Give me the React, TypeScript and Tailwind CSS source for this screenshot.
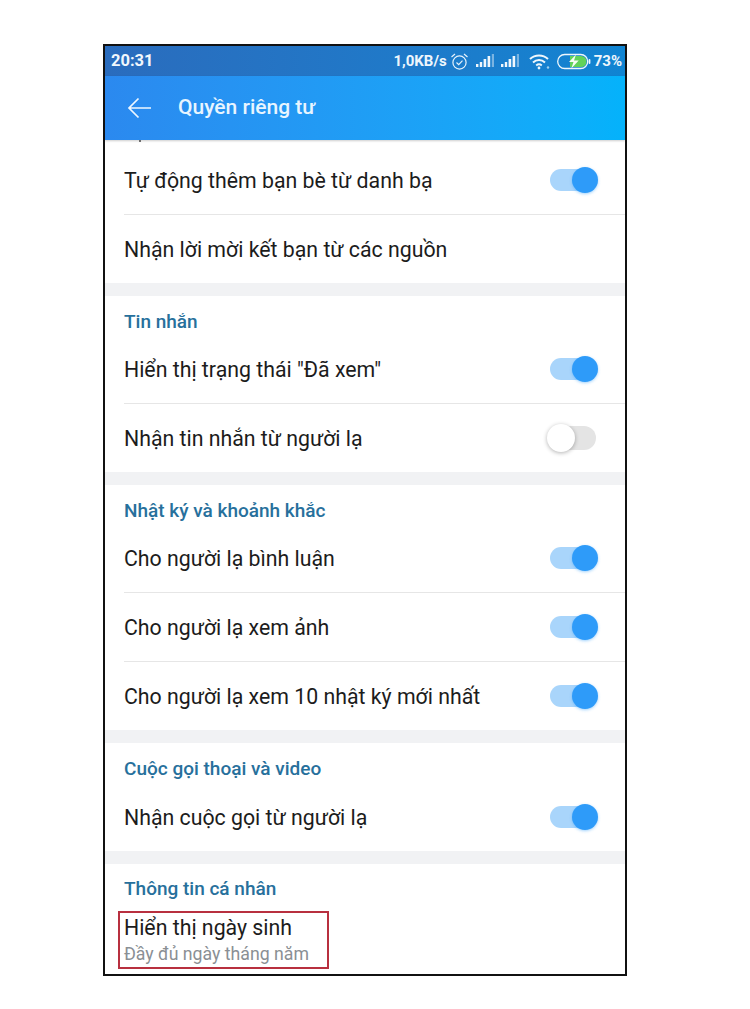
import React from 'react';

const font = { fontFamily: 'Roboto, "Noto Sans", sans-serif' };

const Toggle = ({ on }: { on: boolean }) =>
  on ? (
    <div className="relative h-[22px] w-[48px] shrink-0">
      <div className="h-[22px] w-[40px] rounded-full bg-[#a9d5fb]" />
      <div className="absolute right-0 top-[-2px] h-[26px] w-[26px] rounded-full bg-[#2e9bf9] shadow-[0_1px_3px_rgba(46,155,249,0.45)]" />
    </div>
  ) : (
    <div className="relative mr-[2px] h-[24px] w-[49px] shrink-0">
      <div className="ml-[3px] h-[24px] w-[46px] rounded-full bg-[#e4e4e4]" />
      <div className="absolute left-0 top-[-2px] h-[28px] w-[28px] rounded-full bg-white shadow-[0_1px_4px_rgba(0,0,0,0.3)]" />
    </div>
  );

const Row = ({ label, toggle, divider, height = 68 }: { label: string; toggle?: boolean; divider?: boolean; height?: number }) => (
  <div className={divider ? 'ml-[19px] border-b border-[#e6e6e6]' : 'ml-[19px]'}>
    <div className="flex items-center justify-between pr-[27px] text-[21.3px] text-[#1c1c1c]" style={{ height }}>
      <span className="pt-[2px]">{label}</span>
      {toggle !== undefined && <Toggle on={toggle} />}
    </div>
  </div>
);

const SectionTitle = ({ title, height = 39 }: { title: string; height?: number }) => (
  <div className="flex items-end pl-[19px] pb-[1px] text-[19px] leading-[25px] font-medium text-[#27709c]" style={{ height }}>
    {title}
  </div>
);

const Gap = () => <div className="h-[13px] bg-[#f1f2f4]" />;

const SignalBars = ({ className }: { className: string }) => (
  <svg className={className} width="20" height="16" viewBox="0 0 20 16" fill="#f0f7fc">
    <rect x="0" y="11" width="2.4" height="3" />
    <rect x="3.8" y="9" width="2.4" height="5" />
    <rect x="7.6" y="6" width="2.6" height="8" />
    <rect x="11.6" y="3" width="2.6" height="11" />
    <rect x="15.8" y="1" width="2.2" height="13" opacity="0.45" />
  </svg>
);

const StatusIcons = () => (
  <div className="flex items-center">
    <span className="text-[15px] font-bold text-[#eef6fc]">1,0KB/s</span>
    <svg className="ml-[3px]" width="19" height="19" viewBox="0 0 19 19" fill="none" stroke="#e6f2fb" strokeWidth="1.2">
      <circle cx="9.5" cy="10.5" r="6.6" />
      <path d="M6.5 10.5l2.2 2.2 3.8-4" />
      <path d="M1.5 5L5 2M17.5 5L14 2" />
    </svg>
    <SignalBars className="ml-[7px]" />
    <SignalBars className="ml-[5px]" />
    <svg className="ml-[8px]" width="22" height="17" viewBox="0 0 22 17" fill="none" stroke="#f0f7fc" strokeWidth="2">
      <path d="M1 6C6 1.2 14 1.2 19 6" />
      <path d="M4 9.4c3.4-3.1 8.6-3.1 12 0" />
      <path d="M7.2 12.4c1.7-1.4 3.9-1.4 5.6 0" />
      <circle cx="10" cy="15" r="1.4" fill="#f0f7fc" stroke="none" />
      <circle cx="19" cy="14.5" r="1.2" fill="#9fd0ee" stroke="none" />
    </svg>
    <svg className="ml-[6px]" width="34" height="17" viewBox="0 0 34 17">
      <rect x="0.7" y="1.5" width="30" height="14" rx="7" fill="none" stroke="#eef6fc" strokeWidth="1.3" />
      <path d="M13 3h11a5.5 5.5 0 0 1 0 11H13z" fill="#62d25a" />
      <path d="M19 1.5l-7 7.5h4.5l-2.2 6.5 7.4-8h-4.7z" fill="#f7fcf4" />
      <rect x="31.6" y="6" width="1.8" height="5" rx="0.9" fill="#eef6fc" />
    </svg>
    <span className="ml-[3px] text-[15px] font-bold text-[#eef6fc]">73%</span>
  </div>
);

export default function App() {
  return (
    <div className="h-[1009px] w-[750px] bg-white pl-[103px] pt-[44px]" style={font}>
      <div className="relative h-[932px] w-[524px] overflow-hidden border-2 border-[#111111] bg-white">
        <div className="flex h-[30px] items-center justify-between bg-gradient-to-r from-[#2a6cbd] to-[#0f84d2] pl-[6px] pr-[3px]">
          <span className="text-[16.5px] font-bold text-[#f1f7fc]">20:31</span>
          <StatusIcons />
        </div>
        <div className="flex h-[64px] items-center bg-gradient-to-r from-[#2b89ef] to-[#04b2fb] pl-[22px] shadow-[0_1px_2px_rgba(0,0,0,0.2)]">
          <svg width="26" height="22" viewBox="0 0 26 22" fill="none" stroke="#eef7ff" strokeWidth="1.7">
            <path d="M24 11H2M11.5 1.5L2 11l9.5 9.5" />
          </svg>
          <span className="ml-[25px] text-[21px] font-medium text-[#e8f5ff]">Quyền riêng tư</span>
        </div>

        <div className="ml-[34px] h-[2px] w-[2px] rounded-full bg-[#444444]" />
        <div className="h-[4px]" />
        <Row label="Tự động thêm bạn bè từ danh bạ" toggle={true} divider />
        <Row label="Nhận lời mời kết bạn từ các nguồn" />
        <Gap />

        <SectionTitle title="Tin nhắn" />
        <Row label={'Hiển thị trạng thái "Đã xem"'} toggle={true} divider />
        <Row label="Nhận tin nhắn từ người lạ" toggle={false} />
        <Gap />

        <SectionTitle title="Nhật ký và khoảnh khắc" />
        <Row label="Cho người lạ bình luận" toggle={true} divider />
        <Row label="Cho người lạ xem ảnh" toggle={true} divider />
        <Row label="Cho người lạ xem 10 nhật ký mới nhất" toggle={true} />
        <Gap />

        <SectionTitle title="Cuộc gọi thoại và video" />
        <Row label="Nhận cuộc gọi từ người lạ" toggle={true} height={69} />
        <Gap />

        <SectionTitle title="Thông tin cá nhân" height={38} />
        <div className="pl-[19px] pt-[13px]">
          <div className="text-[21.3px] leading-[26px] text-[#1c1c1c]">Hiển thị ngày sinh</div>
          <div className="text-[17.7px] leading-[26px] text-[#8a8f94]">Đầy đủ ngày tháng năm</div>
        </div>

        <div className="absolute left-[13px] top-[865px] h-[58px] w-[211px] border-2 border-[#b8303f]" />
      </div>
    </div>
  );
}
